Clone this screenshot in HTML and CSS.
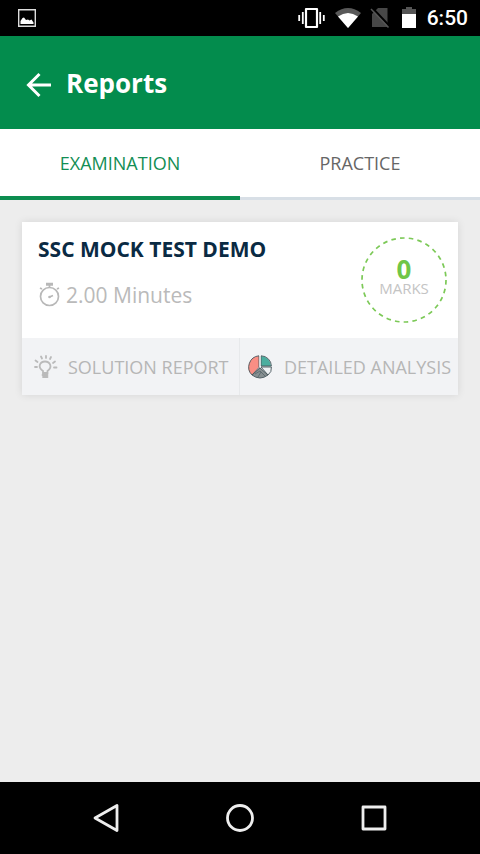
FILE: index.html
```html
<!DOCTYPE html>
<html lang="en">
<head>
<meta charset="utf-8">
<meta name="viewport" content="width=device-width, initial-scale=1">
<title>Reports</title>
<link rel="stylesheet" href="styles.css">
</head>
<body>
<div class="status">
  <svg width="18" height="18" viewBox="0 0 18 18"><path d="M.7.7h16.6v16.6H.7z" fill="none" stroke="#ddd" stroke-width="1.4"/><path d="M2.500 15v-3l2-3 1.500-.4 2 2.500 2-.5 1.500 1 2-1 2 3v1.400z" fill="#fff"/></svg>
  <div class="status-right">
    <svg width="28" height="22" viewBox="0 0 28 22"><path d="M8 2h11v18H8z" fill="none" stroke="#fff" stroke-width="2.200" stroke-linejoin="round"/><path d="M4.800 5v12M1.200 8v6M22.200 5v12M25.800 8v6" stroke="#fff" stroke-width="1.800"/></svg>
    <svg width="26" height="22" viewBox="0 0 26 22"><path d="M0 6Q13-4 26 6L13 21z" fill="#595959"/><path d="M3 9.500Q13 2.500 23 9.500L13 21z" fill="#fff"/></svg>
    <svg width="23" height="22" viewBox="0 0 23 22"><path d="M8 1h9.500v19H2V7z" fill="#474747"/><path d="M2 .5 20 19.500" stroke="#000" stroke-width="2"/><path d="M1 2 18.500 20.500" stroke="#555" stroke-width="1.500"/></svg>
    <svg width="16" height="22" viewBox="0 0 16 22"><path d="M0 2h4V0h6v2h4v6H0z" fill="#555"/><path d="M0 7h14v14H0z" fill="#fff"/></svg>
    <span class="clock">6:50</span>
  </div>
</div>
<header class="bar">
  <button class="back" aria-label="Back"><svg width="26" height="26" viewBox="0 0 26 26"><path d="M25 13H3M13.500 2 2.500 13l11 11" fill="none" stroke="#fff" stroke-width="3"/></svg></button>
  <h1>Reports</h1>
</header>
<nav class="tabs">
  <button class="tab active">EXAMINATION</button>
  <button class="tab">PRACTICE</button>
</nav>
<main>
  <article class="card">
    <div class="summary">
      <div class="info">
        <h2>SSC MOCK TEST DEMO</h2>
        <p class="time"><svg width="22" height="26" viewBox="0 0 22 26"><g fill="none" stroke="#b8b8b8" stroke-width="1.700"><circle cx="11.500" cy="14.500" r="9"/><path d="M11.500 1v5M8 1.500h7M8 3h7M2 6l2 1M21 6l-2 1M11.500 15l3.500-1.500"/></g><circle cx="11.500" cy="15" r="1.300" fill="#b8b8b8"/></svg>2.00 Minutes</p>
      </div>
      <div class="score">
        <svg class="ring" width="88" height="88" viewBox="0 0 88 88"><circle cx="44" cy="44" r="42" fill="none" stroke="#7cc957" stroke-width="1.700" stroke-dasharray="4.600 4.200"/></svg>
        <strong>0</strong>
        <span>MARKS</span>
      </div>
    </div>
    <div class="actions">
      <button class="action solution"><svg width="24" height="24" viewBox="0 0 24 24"><g fill="none" stroke="#bababa" stroke-width="1.800" stroke-linecap="round"><path d="M9 18v-2C3 12 6 6.500 11 6.500S19 12 13.500 16v2zM8.500 20h5M9 22h4.500M7 1.500l1 2M12 .9v2M17 2l-1 2M1.500 5.500 3.500 7M1 12h2M19 8l2-1.500M20 12.500h2.500"/></g></svg>SOLUTION REPORT</button>
      <button class="action detail"><svg width="24" height="24" viewBox="0 0 24 24"><circle cx="12" cy="12" r="11" fill="#eef1f3"/><path d="M11 12V1A11 11 0 0 0 4 20z" fill="#f98e84"/><path d="M13 11V1a10.500 10.500 0 0 1 10 10z" fill="#4bae9f"/><path d="m12 13 8 7q-8 6-16 0z" fill="#879092"/><g fill="none" stroke="#47575c" stroke-width=".9"><path d="M11 .8A11.300 11.300 0 0 0 4 20L11 12.500zM13 .8V11h10.400A10.500 10.500 0 0 0 13 .8zM13 12l7 8q4-3 3.400-8zM12 13l-8 7q8 6 16 0z"/><path d="m7 19 5-3 5 5M10 22l3-5" stroke-width=".6"/></g><path d="M12 0v12" stroke="#fff"/></svg>DETAILED ANALYSIS</button>
    </div>
  </article>
</main>
<div class="system">
  <button aria-label="Back"><svg width="28" height="30" viewBox="0 0 28 30"><path d="M25 2.500v25L3 15z" fill="none" stroke="#eee" stroke-width="2.800" stroke-linejoin="round"/></svg></button>
  <button aria-label="Home"><svg width="28" height="30" viewBox="0 0 28 30"><circle cx="14" cy="15" r="12.500" fill="none" stroke="#eee" stroke-width="2.800"/></svg></button>
  <button aria-label="Recent apps"><svg width="28" height="30" viewBox="0 0 28 30"><path d="M3 4h22v22H3z" fill="none" stroke="#eee" stroke-width="2.800" stroke-linejoin="round"/></svg></button>
</div>
</body>
</html>
```
FILE: styles.css
```css
* { box-sizing: border-box; }
body {
  margin: 0;
  min-height: 100vh;
  display: flex;
  flex-direction: column;
  background: #ededed;
  font-family: "Open Sans", "Noto Sans", sans-serif;
}
button {
  margin: 0;
  padding: 0;
  border: 0;
  background: none;
  font: inherit;
  color: inherit;
}
h1, h2, p { margin: 0; }
svg { display: block; flex: none; }
.status {
  height: 36px;
  padding: 0 12px 0 18px;
  display: flex;
  align-items: center;
  justify-content: space-between;
  background: #000;
}
.status-right {
  display: flex;
  align-items: center;
  gap: 9px;
}
.clock {
  color: #fff;
  font: 500 21px/36px Roboto, sans-serif;
}
.bar {
  height: 93px;
  padding: 4px 26px 0;
  display: flex;
  align-items: center;
  gap: 14px;
  background: #038c4d;
  color: #fff;
}
.bar h1 {
  padding-bottom: 4px;
  font-size: 26px;
  line-height: 36px;
}
.tabs {
  display: grid;
  grid-template-columns: 1fr 1fr;
  background: #fff;
}
.tab {
  height: 71px;
  border-bottom: 3px solid #d8dfe6;
  font-size: 18px;
  color: #666;
}
.tab.active {
  border-bottom: 4px solid #0d8d50;
  color: #128e54;
}
main {
  flex: 1;
  padding: 22px;
}
.card {
  background: #fff;
  box-shadow: 0 0 8px rgba(0, 0, 0, .1);
}
.summary {
  min-height: 116px;
  padding: 12px 10px 12px 16px;
  display: flex;
  justify-content: space-between;
}
.info h2 {
  font-size: 21px;
  line-height: 30px;
  color: #0a2a43;
}
.time {
  margin-top: 16px;
  display: flex;
  align-items: center;
  gap: 6px;
  font-size: 21px;
  line-height: 30px;
  color: #bababa;
}
.score {
  width: 88px;
  padding-top: 24px;
  display: flex;
  flex-direction: column;
  align-items: center;
  position: relative;
}
.ring {
  position: absolute;
  inset: 2px 0 0;
}
.score strong {
  font-size: 26px;
  line-height: 22px;
  color: #70c648;
}
.score span {
  font-size: 15px;
  line-height: 16px;
  color: #c4c4c4;
}
.actions {
  display: grid;
  grid-template-columns: 1fr 1fr;
  background: #f2f3f5;
}
.action {
  height: 57px;
  display: flex;
  align-items: center;
  font-size: 18px;
  white-space: nowrap;
  color: #b6b6b6;
}
.solution {
  padding-left: 12px;
  gap: 10px;
  border-right: 1px solid #e7e9eb;
}
.detail {
  padding-left: 8px;
  gap: 12px;
}
.system {
  height: 72px;
  padding: 0 92px;
  display: flex;
  align-items: center;
  justify-content: space-between;
  background: #000;
}
```
